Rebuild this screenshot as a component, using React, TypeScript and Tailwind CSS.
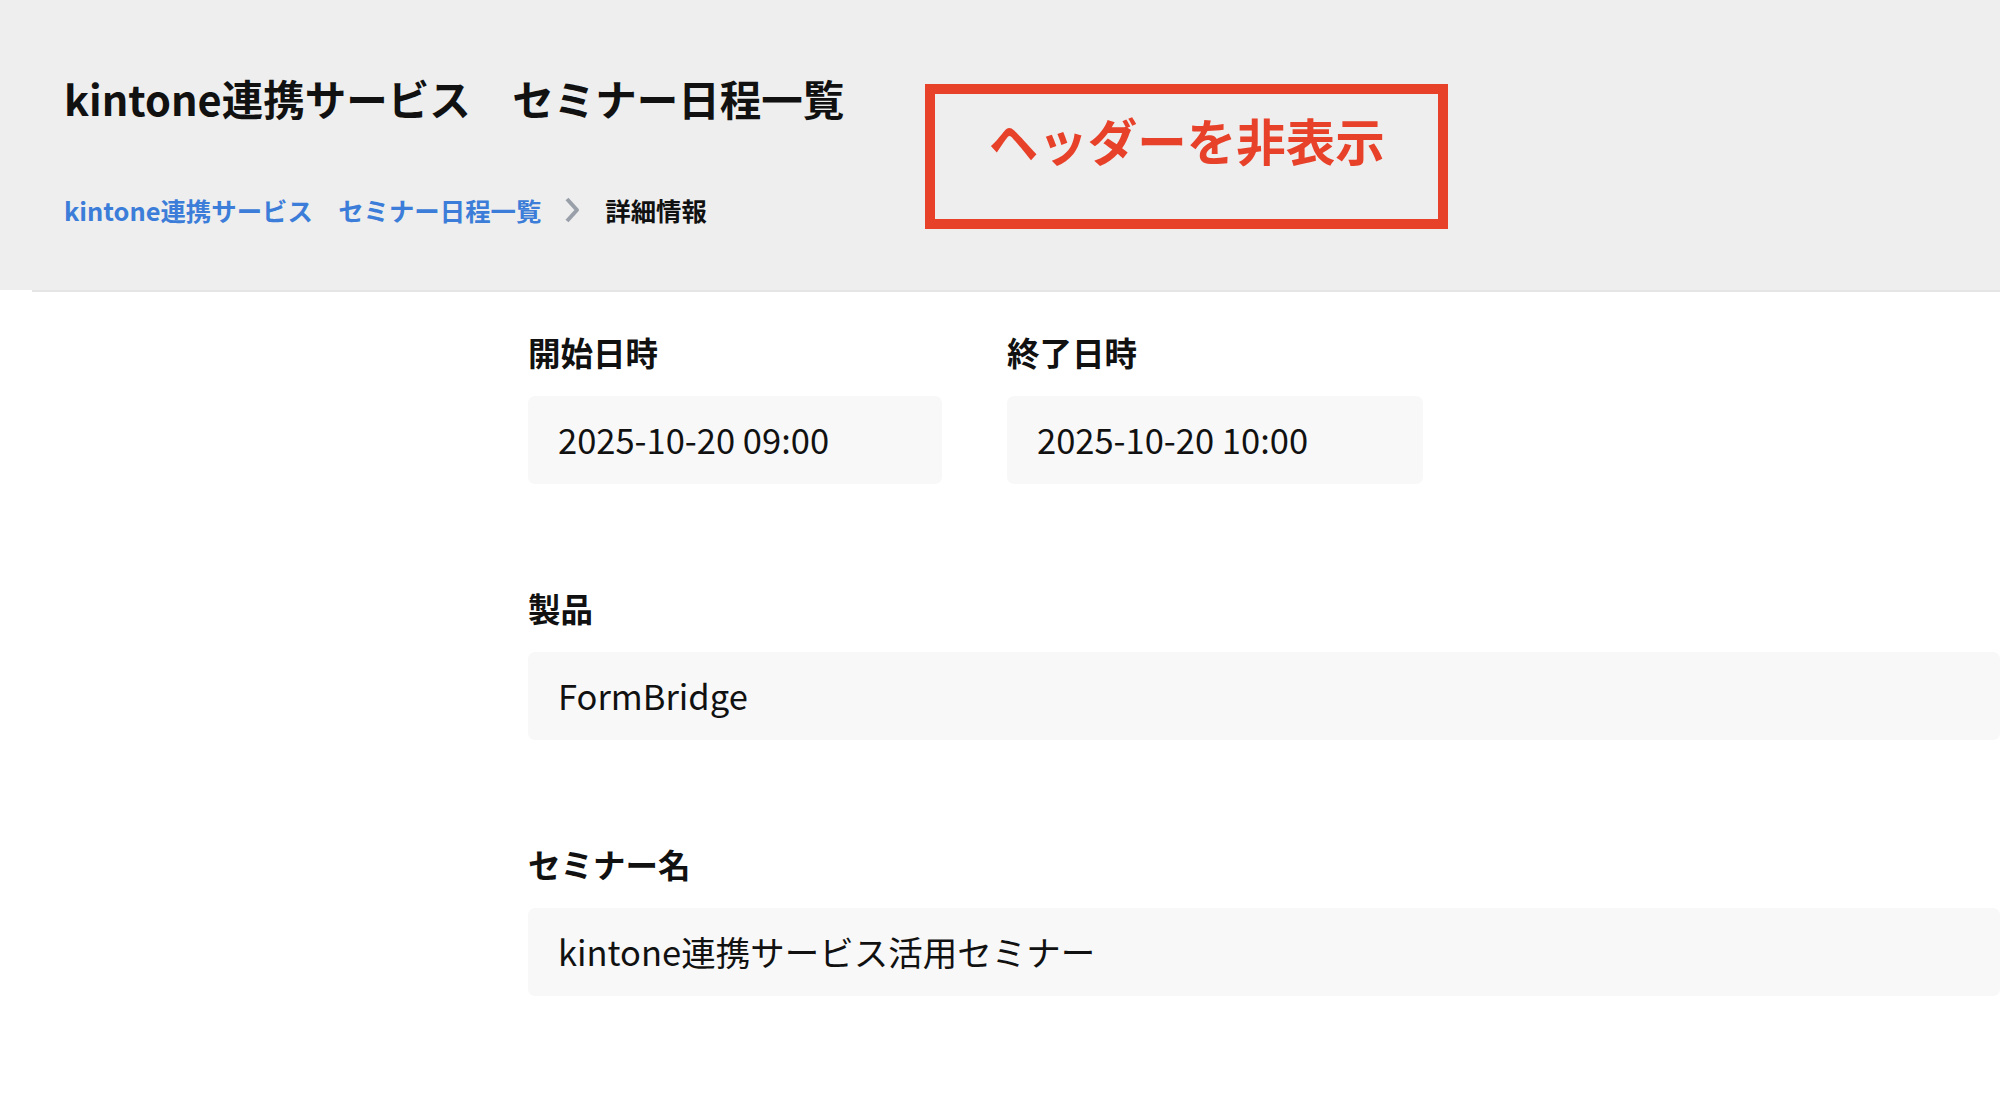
import React from "react";

const font = { fontFamily: '"Noto Sans CJK JP", "Noto Sans", sans-serif' };

function Field({ label, value, className }: { label: string; value: string; className: string }) {
  return (
    <div className={className}>
      <div className="text-[32.5px] leading-[48px] font-bold text-[#111]">{label}</div>
      <div className="mt-[20px] h-[88px] rounded-[7px] bg-[#f8f8f8] flex items-center pl-[30px] text-[34.5px] text-[#111]">
        {value}
      </div>
    </div>
  );
}

export default function App() {
  return (
    <div className="min-h-screen bg-white" style={font}>
      {/* ヘッダー */}
      <header className="h-[290px] bg-[#eeeeee] flex items-start pl-[64px]">
        <div className="pt-[67px]">
          <h1 className="text-[41.5px] leading-[62px] font-bold text-[#111] whitespace-nowrap">
            kintone連携サービス　セミナー日程一覧
          </h1>
          <nav className="mt-[62px] flex items-center text-[25.4px] leading-[38px] font-bold whitespace-nowrap">
            <a className="text-[#3b7dd8]">kintone連携サービス　セミナー日程一覧</a>
            <svg className="ml-[23px] mr-[25px]" width="16" height="26" viewBox="0 0 16 26" fill="none">
              <path d="M3 2l10 11-10 11" stroke="#9aa0aa" strokeWidth="4" strokeLinejoin="round" />
            </svg>
            <span className="text-[#111]">詳細情報</span>
          </nav>
        </div>

        {/* 注釈ボックス */}
        <div className="ml-[81px] mt-[84px] w-[523px] h-[145px] border-[10px] border-[#e8412a] flex justify-center pt-[9px]">
          <span className="text-[49.5px] leading-[74px] font-bold text-[#e8412a] whitespace-nowrap">ヘッダーを非表示</span>
        </div>
      </header>
      <div className="ml-[32px] h-[2px] bg-[#e5e5e5]" />

      {/* 詳細 */}
      <main className="pl-[528px] pt-[36px] flex flex-col gap-[100px]">
        <div className="flex gap-[65px]">
          <Field label="開始日時" value="2025-10-20 09:00" className="w-[414px]" />
          <Field label="終了日時" value="2025-10-20 10:00" className="w-[416px]" />
        </div>
        <Field label="製品" value="FormBridge" className="w-full" />
        <Field label="セミナー名" value="kintone連携サービス活用セミナー" className="w-full" />
      </main>
    </div>
  );
}
